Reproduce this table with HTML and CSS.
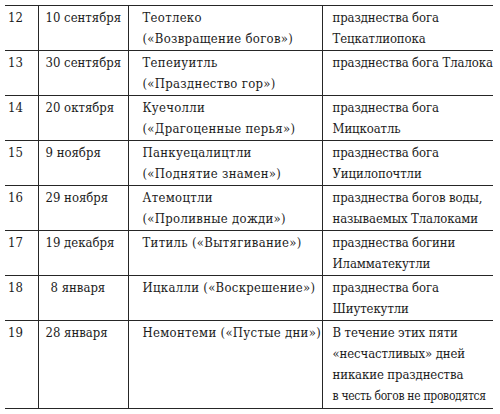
FILE: index.html
```html
<!DOCTYPE html>
<html lang="ru">
<head>
<meta charset="utf-8">
<link rel="stylesheet" href="styles.css">
</head>
<body>
<table class="feasts">
  <colgroup>
    <col class="c-num">
    <col class="c-date">
    <col class="c-name">
    <col class="c-desc">
  </colgroup>
  <tr>
    <td class="num">12</td>
    <td class="date">10 сентября</td>
    <td class="name">Теотлеко<br>(«Возвращение богов»)</td>
    <td class="desc">празднества бога<br>Тецкатлиопока</td>
  </tr>
  <tr>
    <td class="num">13</td>
    <td class="date">30 сентября</td>
    <td class="name">Тепеиуитль<br>(«Празднество гор»)</td>
    <td class="desc">празднества бога Тлалока</td>
  </tr>
  <tr>
    <td class="num">14</td>
    <td class="date">20 октября</td>
    <td class="name">Куечолли<br>(«Драгоценные перья»)</td>
    <td class="desc">празднества бога<br>Мицкоатль</td>
  </tr>
  <tr>
    <td class="num">15</td>
    <td class="date">9 ноября</td>
    <td class="name">Панкуецалицтли<br>(«Поднятие знамен»)</td>
    <td class="desc">празднества бога<br>Уицилопочтли</td>
  </tr>
  <tr>
    <td class="num">16</td>
    <td class="date">29 ноября</td>
    <td class="name">Атемоцтли<br>(«Проливные дожди»)</td>
    <td class="desc">празднества богов воды,<br>называемых Тлалоками</td>
  </tr>
  <tr>
    <td class="num">17</td>
    <td class="date">19 декабря</td>
    <td class="name">Титиль («Вытягивание»)</td>
    <td class="desc">празднества богини<br>Иламматекутли</td>
  </tr>
  <tr>
    <td class="num">18</td>
    <td class="date indent">8 января</td>
    <td class="name">Ицкалли («Воскрешение»)</td>
    <td class="desc">празднества бога<br>Шиутекутли</td>
  </tr>
  <tr>
    <td class="num">19</td>
    <td class="date">28 января</td>
    <td class="name">Немонтеми («Пустые дни»)</td>
    <td class="desc">В течение этих пяти<br>«несчастливых» дней<br>никакие празднества<br><span class="tight">в честь богов не проводятся</span></td>
  </tr>
</table>
</body>
</html>
```

FILE: styles.css
```css
html, body {
  margin: 0;
  padding: 0;
  background: #ffffff;
}

.feasts {
  margin: 5px 0 0 5px;
  border-collapse: collapse;
  table-layout: fixed;
  width: 488px;
  font-family: "DejaVu Serif Condensed", "DejaVu Serif", serif;
  font-stretch: condensed;
  font-size: 13px;
  line-height: 21px;
  color: #1c1c1c;
}

.c-num { width: 33px; }
.c-date { width: 90px; }
.c-name { width: 194px; }
.c-desc { width: 171px; }

.feasts td {
  vertical-align: top;
  padding: 1px 0 1px 0;
  height: 42px;
  box-sizing: border-box;
  border-top: 1.5px solid #262626;
  border-bottom: 1.5px solid #262626;
  white-space: nowrap;
  overflow: visible;
}

.feasts td + td {
  border-left: 1.5px solid #262626;
}

.num {
  padding-left: 3px !important;
}

.date {
  padding-left: 7px !important;
}

.date.indent {
  padding-left: 12px !important;
}

.name {
  padding-left: 14px !important;
  letter-spacing: 0.3px;
}

.desc {
  padding-left: 10px !important;
  letter-spacing: -0.1px;
}

.tight {
  font-size: 12px;
  letter-spacing: -0.3px;
}
```
